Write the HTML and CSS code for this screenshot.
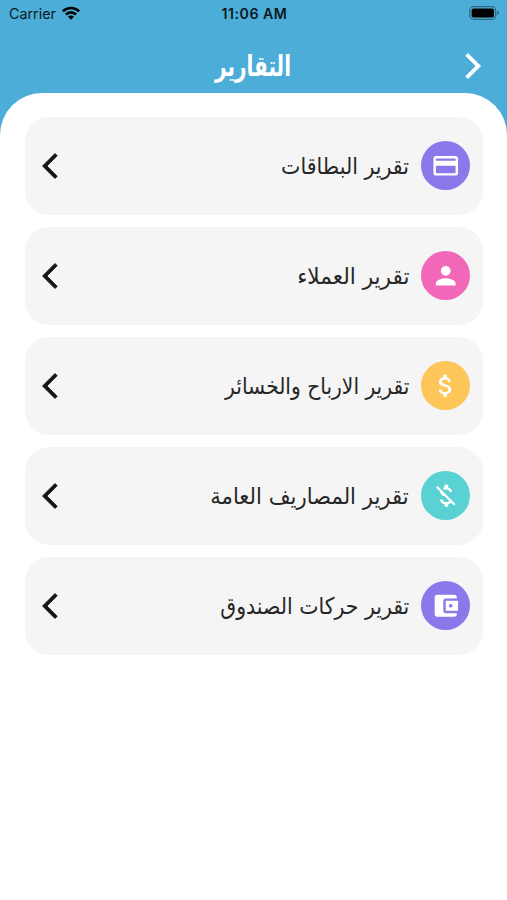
FILE: index.html
```html
<!DOCTYPE html>
<html lang="ar" dir="rtl">
<head>
<meta charset="utf-8">
<title>التقارير</title>
<link rel="stylesheet" href="styles.css">
</head>
<body>
<header class="header">
  <div class="status" dir="ltr">
    <div class="carrier"><span>Carrier</span>
      <svg width="18" height="14" viewBox="0 0 18 14" fill="none" stroke="#000" stroke-width="2.6"><path d="M.9 5.4a11.4 11.4 0 0 1 16.2 0M3.9 8.5a7.2 7.2 0 0 1 10.2 0"/><path d="M9 13.8 6 10.8a4.2 4.2 0 0 1 6 0z" fill="#000" stroke="none"/></svg>
    </div>
    <span class="time">11:06 AM</span>
    <svg class="battery" width="31" height="14" viewBox="0 0 31 14"><rect x=".7" y=".7" width="26" height="12.6" rx="4" fill="none" stroke="#000" stroke-opacity=".4" stroke-width="1.3"/><rect x="2.6" y="2.5" width="22.4" height="9" rx="2"/><path d="M28.3 4.8q3 2.2 0 4.4z" fill-opacity=".5"/></svg>
  </div>
  <div class="bar">
    <svg class="back" viewBox="0 0 24 24"><path d="M6.23 20.23 8 22l10-10L8 2 6.23 3.77 14.46 12z"/></svg>
    <h1 class="title"><span>التقارير</span></h1>
  </div>
</header>
<main class="sheet">
  <div class="card">
    <span class="badge purple"><svg viewBox="0 0 24 24"><path d="M20 4H4c-1.11 0-1.99.89-1.99 2L2 18c0 1.11.89 2 2 2h16c1.11 0 2-.89 2-2V6c0-1.11-.89-2-2-2zm0 14H4v-6h16v6zm0-10H4V6h16v2z"/></svg></span>
    <span class="label cards">تقرير البطاقات</span>
    <svg class="chev" viewBox="0 0 24 24"><path d="M17.77 3.77 16 2 6 12l10 10 1.77-1.77L9.54 12z"/></svg>
  </div>
  <div class="card">
    <span class="badge pink"><svg viewBox="0 0 24 24"><path d="M12 12c2.21 0 4-1.79 4-4s-1.79-4-4-4-4 1.79-4 4 1.79 4 4 4zm0 2c-2.67 0-8 1.34-8 4v2h16v-2c0-2.66-5.33-4-8-4z"/></svg></span>
    <span class="label clients">تقرير العملاء</span>
    <svg class="chev" viewBox="0 0 24 24"><path d="M17.77 3.77 16 2 6 12l10 10 1.77-1.77L9.54 12z"/></svg>
  </div>
  <div class="card">
    <span class="badge amber"><svg viewBox="0 0 24 24"><path d="M11.8 10.9c-2.27-.59-3-1.2-3-2.15 0-1.09 1.01-1.85 2.7-1.85 1.78 0 2.44.85 2.5 2.1h2.21c-.07-1.72-1.12-3.3-3.21-3.81V3h-3v2.16c-1.94.42-3.5 1.68-3.5 3.61 0 2.31 1.91 3.46 4.7 4.13 2.5.6 3 1.48 3 2.41 0 .69-.49 1.79-2.7 1.79-2.06 0-2.87-.92-2.98-2.1h-2.2c.12 2.19 1.76 3.42 3.68 3.83V21h3v-2.15c1.95-.37 3.5-1.5 3.5-3.55 0-2.84-2.43-3.81-4.7-4.4z"/></svg></span>
    <span class="label profit">تقرير الارباح والخسائر</span>
    <svg class="chev" viewBox="0 0 24 24"><path d="M17.77 3.77 16 2 6 12l10 10 1.77-1.77L9.54 12z"/></svg>
  </div>
  <div class="card">
    <span class="badge teal"><svg viewBox="0 0 24 24"><path d="M12.5 6.9c1.78 0 2.44.85 2.5 2.1h2.21c-.07-1.72-1.12-3.3-3.21-3.81V3h-3v2.16c-.53.12-1.03.3-1.48.54l1.47 1.47c.41-.17.91-.27 1.51-.27zM5.33 4.06 4.06 5.33 7.5 8.77c0 2.08 1.56 3.21 3.91 3.91l3.51 3.51c-.34.48-1.05.91-2.42.91-2.06 0-2.87-.92-2.98-2.1h-2.2c.12 2.19 1.76 3.42 3.68 3.83V21h3v-2.15c.96-.18 1.82-.55 2.45-1.12l2.22 2.22 1.27-1.27L5.33 4.06z"/></svg></span>
    <span class="label expenses">تقرير المصاريف العامة</span>
    <svg class="chev" viewBox="0 0 24 24"><path d="M17.77 3.77 16 2 6 12l10 10 1.77-1.77L9.54 12z"/></svg>
  </div>
  <div class="card">
    <span class="badge purple"><svg viewBox="0 0 24 24"><path d="M21 18v1c0 1.1-.9 2-2 2H5c-1.11 0-2-.9-2-2V5c0-1.1.89-2 2-2h14c1.1 0 2 .9 2 2v1h-9c-1.11 0-2 .9-2 2v8c0 1.1.89 2 2 2h9zm-9-2h10V8H12v8zm4-2.5c-.83 0-1.5-.67-1.5-1.5s.67-1.5 1.5-1.5 1.5.67 1.5 1.5-.67 1.5-1.5 1.5z"/></svg></span>
    <span class="label fund">تقرير حركات الصندوق</span>
    <svg class="chev" viewBox="0 0 24 24"><path d="M17.77 3.77 16 2 6 12l10 10 1.77-1.77L9.54 12z"/></svg>
  </div>
</main>
</body>
</html>
```

FILE: styles.css
```css
* { box-sizing: border-box; }
body {
  margin: 0;
  min-height: 900px;
  background: linear-gradient(#4cadd9 200px, #fff 200px);
  font-family: "DejaVu Sans", sans-serif;
  color: #262626;
}
.header { height: 92.5px; }
.status {
  display: grid;
  grid-template-columns: 1fr auto 1fr;
  align-items: center;
  height: 27px;
  padding: 0 7px 0 9px;
  color: #0b1a22;
  font: 14.3px/27px Inter, sans-serif;
}
.carrier { display: flex; align-items: center; gap: 6px; }
.carrier svg { margin-top: -2px; }
.time { font-weight: 600; font-size: 14.2px; letter-spacing: .5px; }
.battery { justify-self: end; margin-top: -1px; }
.bar {
  display: grid;
  grid-template-columns: 40px 1fr 40px;
  align-items: center;
  height: 50px;
  padding: 0 19px;
  margin-top: 14px;
}
.back { width: 30px; height: 30px; fill: #fff; stroke: #fff; stroke-width: .8; }
.title { margin: 0; text-align: center; color: #fff; font-size: 29px; line-height: 50px; }
.title span { display: inline-block; transform: scaleX(.69); }
.sheet {
  display: flex;
  flex-direction: column;
  gap: 12.5px;
  min-height: 807.5px;
  padding: 24.5px 24.5px 0 25px;
  border-radius: 42px 42px 0 0;
  background: #fff;
}
.card {
  display: flex;
  align-items: center;
  height: 97.5px;
  padding: 0 12.5px 0 10px;
  border-radius: 24px;
  background: #f5f5f5;
}
.badge {
  display: grid;
  place-items: center;
  flex: none;
  width: 49px;
  height: 49px;
  border-radius: 50%;
}
.badge svg { width: 29.5px; height: 29.5px; fill: #fff; }
.purple { background: #8c78eb; }
.pink { background: #f268b8; }
.amber { background: #fec558; }
.teal { background: #5ad1d3; }
.label {
  margin-right: 12px;
  font-size: 23px;
  line-height: 32px;
  white-space: nowrap;
  transform-origin: right center;
}
.cards { transform: scaleX(.895); }
.clients { transform: scaleX(.94); }
.profit { transform: scaleX(.88); }
.expenses { transform: scaleX(.92); }
.fund { transform: scaleX(.89); }
.chev { width: 30px; height: 30px; margin-right: auto; fill: #161616; stroke: #161616; stroke-width: .7; }
```
